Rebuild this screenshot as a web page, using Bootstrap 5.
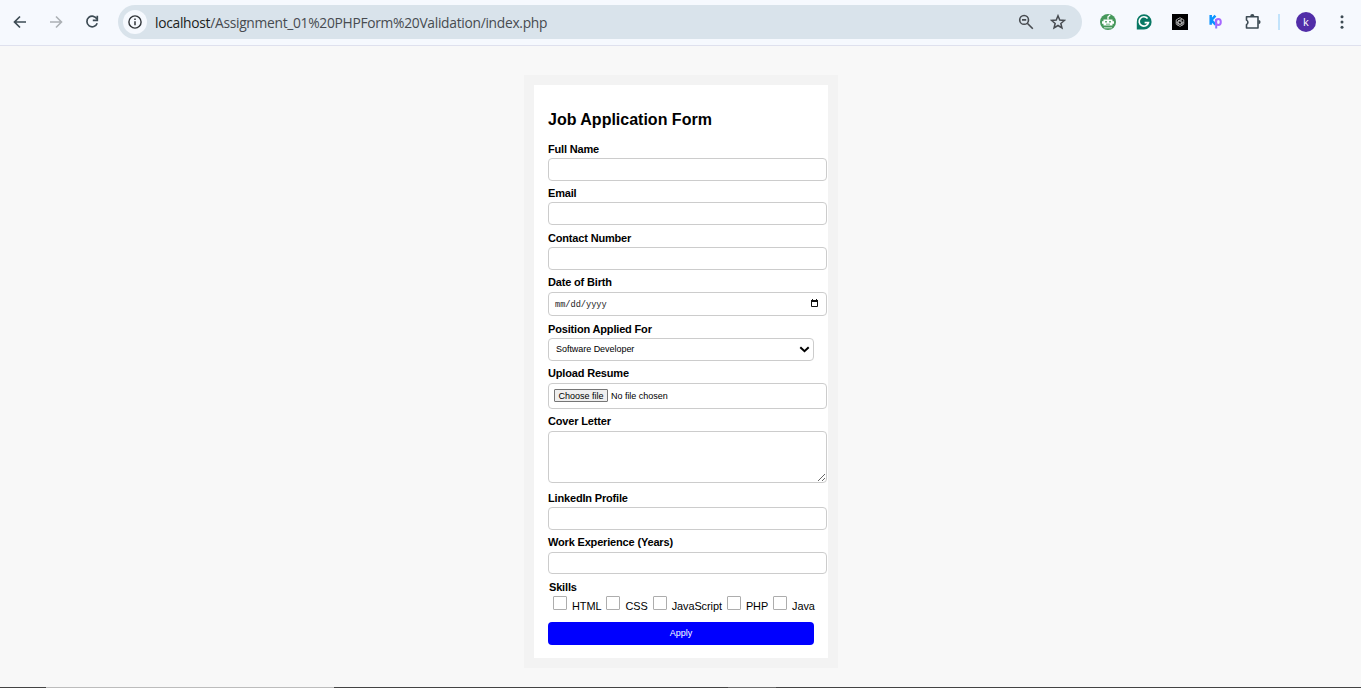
<!DOCTYPE html>
<html lang="en">
<head>
<meta charset="utf-8">
<meta name="viewport" content="width=device-width, initial-scale=1">
<title>Job Application Form</title>
<link href="https://cdn.jsdelivr.net/npm/bootstrap@5.3.0/dist/css/bootstrap.min.css" rel="stylesheet">
<style>
body{height:688px;overflow:hidden;background:#f8f8f8;color:#000;font-family:"Liberation Sans",Arial,sans-serif;font-size:11px}
.toolbar{height:46px;background:#f6f9fe;border-bottom:1px solid #dfe1ee;padding-bottom:1px}
.toolbar svg{display:block;flex:none}
.w-back{width:118px;padding-left:12px;gap:20px}
.address{width:964px;height:34px;background:#d9e3eb;border-radius:17px;padding:0 16px 0 5px}
.site-info{width:24px;height:24px;background:#f6f9fe}
.url{font:13.8px "Open Sans","Noto Sans",sans-serif;color:#474b50;margin-left:8px;white-space:nowrap;letter-spacing:-.29px}
.url b{font-weight:400;color:#1c1e21}
.ext{padding-left:18px}
.gap-x{margin:0 20px}
.avatar{width:20px;height:20px;background:#512da8;color:#fff;font:11px/19px "Open Sans",sans-serif;text-align:center}
.split{width:2px;height:16px;background:#c2e3fb;margin:0 16px}
.shell{width:314px;height:593px;margin:29px 0 0 524px;border:10px solid #f3f3f3;background:#fff;padding:14px 14px 13px}
.shell h1{font-size:16px;font-weight:700;line-height:41px;margin:0;height:41px}
.entry{margin-bottom:3px}
.entry.roomy{margin-bottom:4px}
.entry label,.skills-title{display:block;font-size:11px;font-weight:700;line-height:18px;height:18px;white-space:nowrap;letter-spacing:-.17px}
.entry.deep label{height:19px}
.entry .form-control,.entry .form-select{width:279px;height:23px;min-height:0;border:1px solid #ccc;border-radius:4px;padding:0 5px;font-size:9px;color:#000;background-color:#fff;box-shadow:none}
.entry .form-select{width:266px;padding:0 7px 1px;background-image:none;line-height:20px;letter-spacing:-.04px}
.pick{position:relative;width:266px}
.pick svg{position:absolute;right:4px;top:7px}
.entry .date-box{height:24px;font-family:"Liberation Mono",monospace;font-size:8.67px;padding:1px 7px 0 6px;color:#222}
.date-box span{padding-top:2px;letter-spacing:-.03px}
.entry .file-box{height:26px;padding-bottom:1px}
.file-box span{margin-left:3px;padding-top:2px;letter-spacing:-.03px}
.choose{width:54px;height:13px;border:1px solid #767676;border-radius:1px;background:#efefef;padding:0;font-size:9px;line-height:12px;color:#000}
.entry textarea.form-control{height:52px;display:block}
.skills{height:26px;gap:5px;white-space:nowrap;padding-left:5px}
.skills .form-check-input{width:14px;height:14px;margin:0 5px 0 0;border:1px solid #adadad;border-radius:1px;flex:none}
.skills span{line-height:20px;height:20px;font-size:10.9px;letter-spacing:-.06px}
.btn.apply{width:266px;height:23px;background:#00f;border:0;border-radius:4px;color:#fff;font-size:9px;line-height:21px;padding:0 0 1px}
.foot{height:1px;background:#444;margin-top:19px}
.foot i{display:block;height:1px}
.seg-a{width:288px;margin-left:46px;background:#bcbcbc}
.seg-b{width:48px;margin-left:394px;background:#6c6c6c}
</style>
</head>
<body>
<header class="toolbar d-flex align-items-center">
  <div class="w-back d-flex align-items-center">
    <svg width="16" height="16" viewBox="0 0 16 16" fill="none" stroke="#3d4b54" stroke-width="1.7"><path d="M14 8H3M8 2.5 2.5 8 8 13.5"/></svg>
    <svg width="16" height="16" viewBox="0 0 16 16" fill="none" stroke="#acb0b5" stroke-width="1.6"><path d="M2 8h11M8 2.5 13.5 8 8 13.5"/></svg>
    <svg width="16" height="16" viewBox="0 0 16 16" fill="none" stroke="#3d4b54" stroke-width="1.7"><path d="M13 5.2A5.3 5.3 0 1 0 13.2 9.3"/><path d="M13.3 1.8v4.5H8.8"/></svg>
  </div>
  <div class="address d-flex align-items-center">
    <div class="site-info rounded-circle d-flex align-items-center justify-content-center">
      <svg width="14" height="14" viewBox="0 0 14 14"><circle cx="7" cy="7" r="6.1" fill="none" stroke="#303438" stroke-width="1.4"/><path d="M7 6.3v4M7 3.6v1.5" stroke="#303438" stroke-width="1.5"/></svg>
    </div>
    <div class="url"><b>localhost</b>/Assignment_01%20PHPForm%20Validation/index.php</div>
    <div class="d-flex ms-auto gap-3">
      <svg width="16" height="16" viewBox="0 0 16 16" fill="none" stroke="#474b50" stroke-width="1.6"><circle cx="6.1" cy="5.9" r="4.4"/><path d="M9.3 9.2 14.8 14.7M4 5.9h4.2"/></svg>
      <svg width="16" height="16" viewBox="0 0 16 16" fill="none" stroke="#474b50" stroke-width="1.5"><path d="m8 1.8 1.75 4.3 4.65.35-3.55 3 1.1 4.5L8 11.5l-3.95 2.45 1.1-4.5-3.55-3 4.65-.35z"/></svg>
    </div>
  </div>
  <div class="ext d-flex align-items-center flex-grow-1">
    <svg width="16" height="16" viewBox="0 0 16 16"><circle cx="8" cy="8" r="8" fill="#46985b"/><path d="M8 5.5V2.8L10.2 1" stroke="#fff" stroke-width="1.3" fill="none"/><path d="M3.5 5.5h9v6h-9zM2 7.3h1.5v2.4H2zM12.5 7.3h1.5v2.4h-1.5z" fill="#fff"/><path d="M4 13.8h8" stroke="#cfe6d4" stroke-width="1"/><path d="M5.2 7h1.6v1.5H5.2zM9.2 7h1.6v1.5H9.2zM6 9.7h4v.8H6z" fill="#46985b"/></svg>
    <svg class="gap-x" width="16" height="16" viewBox="0 0 16 16"><path d="M8 .3a7.6 7.6 0 1 1 0 15.2H.8V8A7.3 7.3 0 0 1 8 .3" fill="#087864"/><path d="M11.6 4.6A4.7 4.7 0 1 0 12.4 8.7H8.6" fill="none" stroke="#fff" stroke-width="1.7"/></svg>
    <svg width="16" height="16" viewBox="0 0 16 16"><path fill="#000" d="M0 0h16v16H0z"/><g fill="none" stroke="#b8b8b8" stroke-width=".9"><path d="m8 3.7 3.8 2.2v4.3L8 12.4l-3.8-2.2V5.9z"/><path d="m6 6.2 4 2.3v3M10 5 6 7.3v4.2M4.3 8.2 8 10.4l3.8-2.2M6 7.2l2-1.2 2 1.2v2.1l-2 1.2-2-1.2z"/></g></svg>
    <svg class="gap-x" width="16" height="16" viewBox="0 0 16 16" fill="none"><path d="M2.7 1v9.8M7.4 1.6 3.3 6.2l4.3 4.5" stroke="#0b94ff" stroke-width="2.5"/><path d="M8.2 14.5V5" stroke="#8b72ff" stroke-width="2"/><ellipse cx="10.3" cy="8" rx="2.5" ry="3" stroke="#a768ff" stroke-width="2"/></svg>
    <svg width="18" height="18" viewBox="0 0 18 18"><path d="M2.5 3.7h11.5v11.3H2.5v-3.4a2.5 2.5 0 0 0 0-4.5z" fill="none" stroke="#3d4b54" stroke-width="1.6" stroke-linejoin="round"/><path d="M6.2 3.2a2.1 2.1 0 0 1 4.2 0zM14.5 7a2.1 2.1 0 0 1 0 4.2z" fill="#3d4b54"/></svg>
    <div class="split"></div>
    <div class="avatar rounded-circle">k</div>
    <svg class="ms-3" width="20" height="16" viewBox="0 0 20 16" fill="#3d4b54"><circle cx="10" cy="2.8" r="1.5"/><circle cx="10" cy="8" r="1.5"/><circle cx="10" cy="13.2" r="1.5"/></svg>
  </div>
</header>
<main>
  <form class="shell">
    <h1>Job Application Form</h1>
    <div class="entry"><label for="name">Full Name</label><input id="name" class="form-control" type="text"></div>
    <div class="entry roomy"><label for="email">Email</label><input id="email" class="form-control" type="email"></div>
    <div class="entry"><label for="phone">Contact Number</label><input id="phone" class="form-control" type="tel"></div>
    <div class="entry deep roomy"><label>Date of Birth</label>
      <div class="form-control date-box d-flex align-items-center justify-content-between"><span>mm/dd/yyyy</span>
        <svg width="9" height="11" viewBox="0 0 9 11"><path d="M1.5 2.5h6v5h-6z" fill="none" stroke="#111"/><path d="M1 1h7v2H1zM2 0h1v1H2zM6 0h1v1H6z" fill="#111"/></svg></div></div>
    <div class="entry"><label for="role">Position Applied For</label>
      <div class="pick"><select id="role" class="form-select"><option>Software Developer</option></select>
        <svg width="11" height="9" viewBox="0 0 11 9" fill="none" stroke="#000" stroke-width="2"><path d="m1.3 2.2 4.2 4 4.2-4"/></svg></div></div>
    <div class="entry deep"><label>Upload Resume</label>
      <div class="form-control file-box d-flex align-items-center"><button type="button" class="choose">Choose file</button><span>No file chosen</span></div></div>
    <div class="entry deep mb-0 pb-1"><label for="cover">Cover Letter</label><textarea id="cover" class="form-control"></textarea></div>
    <div class="entry" style="padding-top:2px"><label for="linkedin">LinkedIn Profile</label><input id="linkedin" class="form-control" type="text"></div>
    <div class="entry deep roomy"><label for="years">Work Experience (Years)</label><input id="years" class="form-control" style="height:22px" type="text"></div>
    <div class="skills-title" style="padding-left:1px">Skills</div>
    <div class="skills d-flex">
      <div class="d-flex"><input class="form-check-input" type="checkbox"><span>HTML</span></div>
      <div class="d-flex"><input class="form-check-input" type="checkbox"><span>CSS</span></div>
      <div class="d-flex"><input class="form-check-input" type="checkbox"><span>JavaScript</span></div>
      <div class="d-flex"><input class="form-check-input" type="checkbox"><span>PHP</span></div>
      <div class="d-flex"><input class="form-check-input" type="checkbox"><span>Java</span></div>
    </div>
    <button type="button" class="btn apply d-block">Apply</button>
  </form>
</main>
<div class="foot d-flex"><i class="seg-a"></i><i class="seg-b"></i></div>
<script src="https://cdn.jsdelivr.net/npm/bootstrap@5.3.0/dist/js/bootstrap.bundle.min.js"></script>
</body>
</html>
